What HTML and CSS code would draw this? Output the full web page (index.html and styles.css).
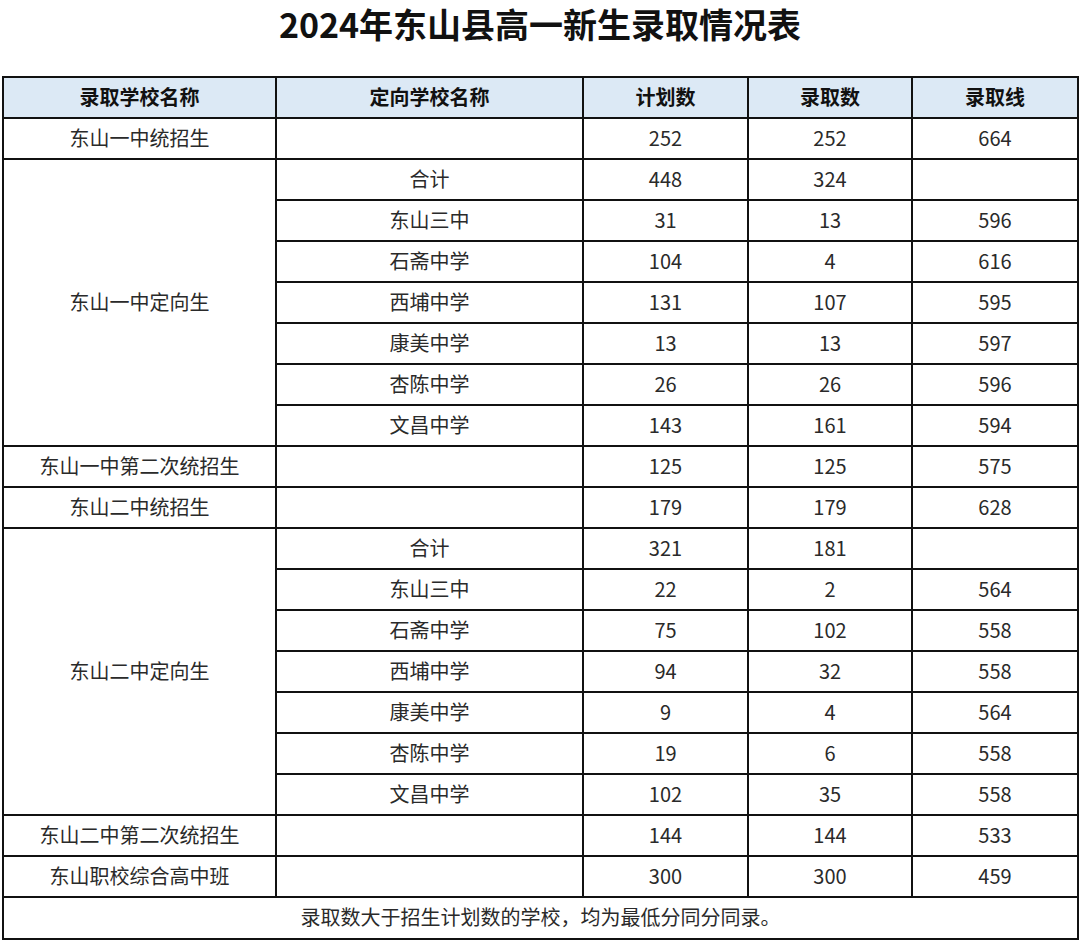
FILE: index.html
```html
<!DOCTYPE html>
<html lang="zh-CN">
<head>
<meta charset="utf-8">
<title>2024年东山县高一新生录取情况表</title>
<link rel="stylesheet" href="styles.css">
</head>
<body>
<div class="page">
  <h1 class="title">2024年东山县高一新生录取情况表</h1>
  <table class="tbl">
    <colgroup>
      <col class="c1"><col class="c2"><col class="c3"><col class="c4"><col class="c5">
    </colgroup>
    <thead>
      <tr><th>录取学校名称</th><th>定向学校名称</th><th>计划数</th><th>录取数</th><th>录取线</th></tr>
    </thead>
    <tbody>
      <tr><td>东山一中统招生</td><td></td><td>252</td><td>252</td><td>664</td></tr>
      <tr><td rowspan="7">东山一中定向生</td><td>合计</td><td>448</td><td>324</td><td></td></tr>
      <tr><td>东山三中</td><td>31</td><td>13</td><td>596</td></tr>
      <tr><td>石斋中学</td><td>104</td><td>4</td><td>616</td></tr>
      <tr><td>西埔中学</td><td>131</td><td>107</td><td>595</td></tr>
      <tr><td>康美中学</td><td>13</td><td>13</td><td>597</td></tr>
      <tr><td>杏陈中学</td><td>26</td><td>26</td><td>596</td></tr>
      <tr><td>文昌中学</td><td>143</td><td>161</td><td>594</td></tr>
      <tr><td>东山一中第二次统招生</td><td></td><td>125</td><td>125</td><td>575</td></tr>
      <tr><td>东山二中统招生</td><td></td><td>179</td><td>179</td><td>628</td></tr>
      <tr><td rowspan="7">东山二中定向生</td><td>合计</td><td>321</td><td>181</td><td></td></tr>
      <tr><td>东山三中</td><td>22</td><td>2</td><td>564</td></tr>
      <tr><td>石斋中学</td><td>75</td><td>102</td><td>558</td></tr>
      <tr><td>西埔中学</td><td>94</td><td>32</td><td>558</td></tr>
      <tr><td>康美中学</td><td>9</td><td>4</td><td>564</td></tr>
      <tr><td>杏陈中学</td><td>19</td><td>6</td><td>558</td></tr>
      <tr><td>文昌中学</td><td>102</td><td>35</td><td>558</td></tr>
      <tr><td>东山二中第二次统招生</td><td></td><td>144</td><td>144</td><td>533</td></tr>
      <tr><td>东山职校综合高中班</td><td></td><td>300</td><td>300</td><td>459</td></tr>
      <tr><td colspan="5" class="note">录取数大于招生计划数的学校，均为最低分同分同录。</td></tr>
    </tbody>
  </table>
</div>
</body>
</html>
```

FILE: styles.css
```css
html, body {
  margin: 0;
  padding: 0;
  background: #ffffff;
}
body {
  font-family: "Noto Sans CJK SC", "Noto Sans", sans-serif;
  color: #1a1a1a;
}
.page {
  width: 1080px;
  padding: 0 2px 0 2px;
  box-sizing: border-box;
}
.title {
  margin: 0;
  line-height: 48px;
  font-size: 34px;
  font-weight: bold;
  text-align: center;
  color: #111;
}
.tbl {
  margin-top: 28px;
  width: 1075px;
  border-collapse: collapse;
  table-layout: fixed;
  border: 2px solid #111;
}
.c1 { width: 273px; }
.c2 { width: 307px; }
.c3 { width: 165px; }
.c4 { width: 164px; }
.c5 { width: 166px; }
.tbl th, .tbl td {
  border: 2px solid #111;
  height: 37px;
  padding: 0 0 2px 0;
  text-align: center;
  vertical-align: middle;
  font-size: 20px;
  line-height: 24px;
}
.tbl th {
  background: #dce9f5;
  font-weight: bold;
  color: #111;
}
.tbl td {
  color: #2a2a2a;
}
.tbl td.note {
  height: 38px;
}
```
